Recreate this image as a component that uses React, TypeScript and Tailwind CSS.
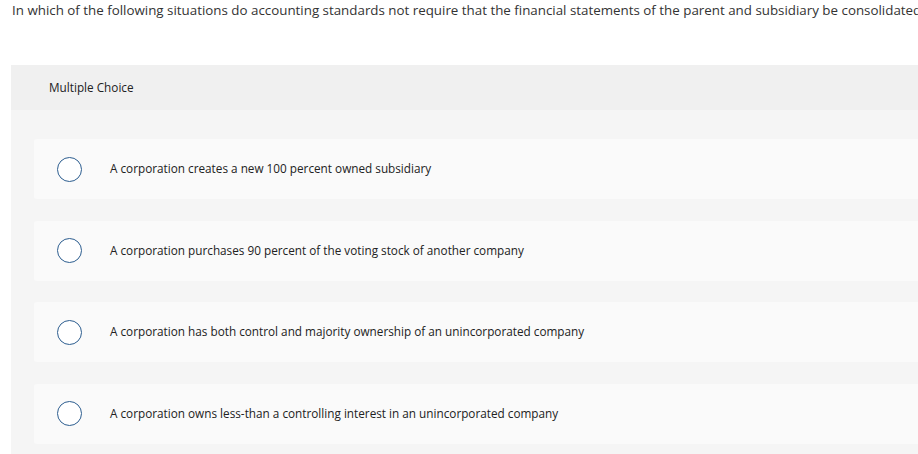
import React from "react";

const options = [
  "A corporation creates a new 100 percent owned subsidiary",
  "A corporation purchases 90 percent of the voting stock of another company",
  "A corporation has both control and majority ownership of an unincorporated company",
  "A corporation owns less-than a controlling interest in an unincorporated company",
];

export default function App() {
  return (
    <div
      className="w-[918px] h-[454px] overflow-hidden bg-white"
      style={{ fontFamily: "'Open Sans', Lato, sans-serif" }}
    >
      <div className="pl-[12px] h-[65px] whitespace-nowrap text-[13.35px] leading-[20px] text-[#333]">
        In which of the following situations do accounting standards not require that the financial statements of the parent and subsidiary be consolidated?
      </div>
      <div className="ml-[11px] w-[930px]">
        <div className="h-[45px] bg-[#f0f0f0] flex items-center pl-[38px] text-[11.75px] text-[#222]">
          Multiple Choice
        </div>
        <div className="bg-[#f5f5f5] pl-[23px] pt-[29px] pb-[12px] flex flex-col gap-[21.5px]">
          {options.map((o) => (
            <div
              key={o}
              className="h-[60px] bg-[#fafafa] rounded-[3px] flex items-center pl-[23px]"
            >
              <div className="w-[25px] h-[25px] rounded-full border-[1.5px] border-[#2c5d8f] bg-white shrink-0" />
              <span className="ml-[28px] text-[11.75px] text-[#222] whitespace-nowrap">{o}</span>
            </div>
          ))}
        </div>
      </div>
    </div>
  );
}
